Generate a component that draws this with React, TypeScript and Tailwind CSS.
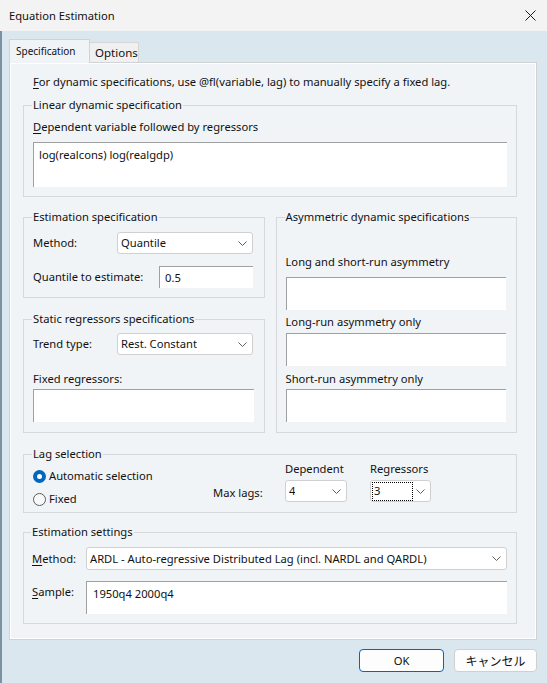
import React from 'react'

const Chevron = () => (
  <svg width="9" height="5" viewBox="0 0 9 5" fill="none" className="shrink-0">
    <path d="M0.5 0.5L4.5 4.5L8.5 0.5" stroke="#5f5f5f" strokeWidth="1" />
  </svg>
)

const Select: React.FC<{ value: string; className?: string; focus?: boolean }> = ({ value, className = '', focus = false }) => (
  <div
    className={`flex h-[22px] items-center justify-between rounded-[3px] border border-[#d0d0d0] bg-white pl-[3px] pr-[5px] ${className}`}
  >
    {focus ? (
      <span className="-ml-[2px] flex h-[19px] w-[41px] items-center border border-dotted border-black pl-[1px]">{value}</span>
    ) : (
      <span className="truncate">{value}</span>
    )}
    <Chevron />
  </div>
)

const Field: React.FC<{ value?: string; className?: string }> = ({ value = '', className = '' }) => (
  <div className={`border-l border-t border-[#a0a0a0] bg-white pl-[5px] ${className}`}>{value}</div>
)

const Radio: React.FC<{ checked?: boolean; label: string }> = ({ checked = false, label }) => (
  <div className="flex h-[16px] items-center">
    {checked ? (
      <span className="flex h-[13px] w-[13px] items-center justify-center rounded-full bg-[#0067c0]">
        <span className="h-[5px] w-[5px] rounded-full bg-white" />
      </span>
    ) : (
      <span className="h-[13px] w-[13px] rounded-full border border-[#5c5c5c] bg-[#f8f8f8]" />
    )}
    <span className="ml-[3px]">{label}</span>
  </div>
)

const Legend: React.FC<{ children: React.ReactNode }> = ({ children }) => (
  <legend className="-ml-[1px] px-[1px] leading-[16px]">{children}</legend>
)

export default function App() {
  return (
    <div className="flex h-[683px] w-[547px] flex-col overflow-hidden font-['Noto_Sans','Segoe_UI',sans-serif] text-[11.2px] leading-[16px] text-[#111111]">
      {/* title bar */}
      <div className="flex h-[31px] shrink-0 items-center justify-between bg-[#f3f3f3] pl-[9px] pr-[11px]">
        <span>Equation Estimation</span>
        <svg width="11" height="11" viewBox="0 0 11 11" fill="none">
          <path d="M0.5 0.5L10.5 10.5M10.5 0.5L0.5 10.5" stroke="#1a1a1a" strokeWidth="1" />
        </svg>
      </div>

      <div className="flex flex-1 flex-col border-l-2 border-[#7a92a1] bg-[#dae7ef] pl-[7px] pr-[10px] pt-[8px]">
        {/* tabs */}
        <div className="flex h-[23px] items-end">
          <div className="relative z-10 -mb-px flex h-[24px] w-[81px] items-start border border-b-0 border-[#cfd3d6] bg-[#f0f4f7] pl-[6px] pt-[4px] text-[10px] leading-[14px]">
            Specification
          </div>
          <div className="flex h-[20px] w-[49px] items-center border border-b-0 border-l-0 border-[#d6d6d6] bg-[#f0f0f0] pl-[5px] text-[11.5px]">
            Options
          </div>
        </div>

        {/* panel */}
        <div className="flex h-[578px] flex-col border border-[#cfd3d6] bg-[#f0f4f7] pl-[13px] pr-[19px] pt-[11px] shadow-[inset_1px_1px_0_#ffffff,inset_-1px_-1px_0_#ffffff]">
          <div className="ml-[10px]">
            <u className="underline-offset-[2px]">F</u>or dynamic specifications, use @fl(variable, lag) to manually specify a fixed lag.
          </div>

          <fieldset className="mt-[7px] min-w-0 border border-[#d5d9dc] pb-[9px] pl-[9px] pr-[9px] pt-[6px]">
            <Legend>Linear dynamic specification</Legend>
            <div>
              <u className="underline-offset-[2px]">D</u>ependent variable followed by regressors
            </div>
            <Field value="log(realcons) log(realgdp)" className="mt-[7px] h-[45px] pt-[4px]" />
          </fieldset>

          <div className="mt-[12px] grid grid-cols-2 gap-x-[11px]">
            <div className="flex flex-col">
              <fieldset className="min-w-0 border border-[#d5d9dc] pb-[9px] pl-[9px] pr-[10px] pt-[7px]">
                <Legend>Estimation specification</Legend>
                <div className="flex h-[22px] items-center">
                  <span className="w-[84px] shrink-0">Method:</span>
                  <Select value="Quantile" className="w-[136px]" />
                </div>
                <div className="mt-[12px] flex h-[22px] items-center">
                  <span className="w-[126px] shrink-0">Quantile to estimate:</span>
                  <Field value="0.5" className="flex h-[22px] w-[94px] items-center" />
                </div>
              </fieldset>

              <fieldset className="mt-[13px] min-w-0 border border-[#d5d9dc] pb-[10px] pl-[9px] pr-[10px] pt-[6px]">
                <Legend>Static regressors specifications</Legend>
                <div className="flex h-[22px] items-center">
                  <span className="w-[84px] shrink-0">Trend type:</span>
                  <Select value="Rest. Constant" className="w-[136px]" />
                </div>
                <div className="mt-[16px]">Fixed regressors:</div>
                <Field className="mt-[2px] h-[33px]" />
              </fieldset>
            </div>

            <fieldset className="min-w-0 border border-[#d5d9dc] pb-[10px] pl-[9px] pr-[10px] pt-[29px]">
              <Legend>Asymmetric dynamic specifications</Legend>
              <div>Long and short-run asymmetry</div>
              <Field className="mt-[7px] h-[33px]" />
              <div className="mt-[4px]">Long-run asymmetry only</div>
              <Field className="mt-[3px] h-[33px]" />
              <div className="mt-[5px]">Short-run asymmetry only</div>
              <Field className="mt-[2px] h-[33px]" />
            </fieldset>
          </div>

          <fieldset className="mt-[13px] min-w-0 border border-[#d5d9dc] pb-[5px] pl-[9px] pr-[9px]">
            <Legend>Lag selection</Legend>
            <div className="flex items-start">
              <div className="flex w-[180px] flex-col gap-[7px] pt-[6px]">
                <Radio checked label="Automatic selection" />
                <Radio label="Fixed" />
              </div>
              <div className="w-[72px] pt-[23px]">Max lags:</div>
              <div className="-mt-px flex w-[62px] flex-col">
                <span>Dependent</span>
                <Select value="4" className="mt-[3px]" />
              </div>
              <div className="-mt-px ml-[23px] flex w-[61px] flex-col">
                <span>Regressors</span>
                <Select value="3" focus className="mt-[3px]" />
              </div>
            </div>
          </fieldset>

          <fieldset className="mt-[11px] min-w-0 border border-[#d5d9dc] pb-[9px] pl-[8px] pr-[9px] pt-[7px]">
            <Legend>Estimation settings</Legend>
            <div className="flex h-[23px] items-center">
              <span className="w-[54px] shrink-0">
                <u className="underline-offset-[2px]">M</u>ethod:
              </span>
              <Select value="ARDL - Auto-regressive Distributed Lag (incl. NARDL and QARDL)" className="h-[23px] flex-1" />
            </div>
            <div className="mt-[11px] flex h-[33px] items-start">
              <span className="w-[54px] shrink-0 pt-[3px]">
                <u className="underline-offset-[2px]">S</u>ample:
              </span>
              <Field value="1950q4 2000q4" className="h-[33px] flex-1 pl-[6px] pt-[4px]" />
            </div>
          </fieldset>
        </div>

        {/* buttons */}
        <div className="mt-[9px] flex justify-end gap-[10px]">
          <button
            type="button"
            className="flex h-[23px] w-[85px] items-center justify-center rounded-[4px] border border-[#0067c0] bg-[#fdfdfd]"
          >
            OK
          </button>
          <button
            type="button"
            className="flex h-[23px] w-[83px] items-center justify-center rounded-[4px] border border-[#d0d0d0] bg-[#fdfdfd] font-['Noto_Sans_CJK_JP',sans-serif] text-[12px]"
          >
            キャンセル
          </button>
        </div>
      </div>
    </div>
  )
}
